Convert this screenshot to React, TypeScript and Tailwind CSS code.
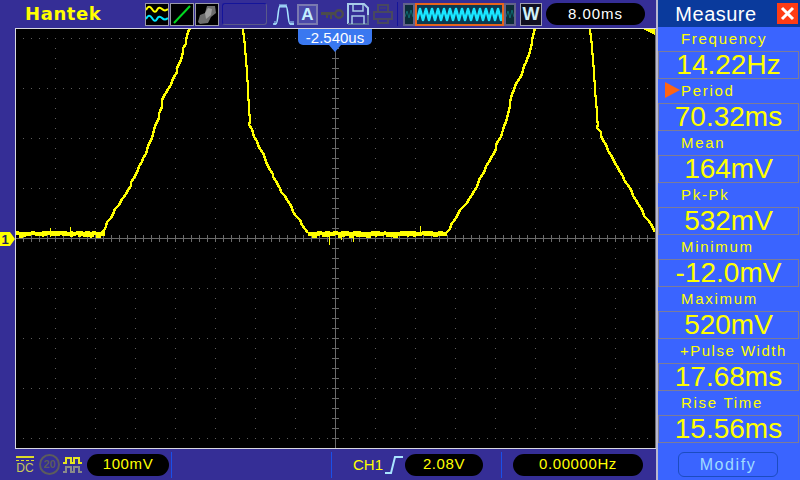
import React from "react";

const W = 641, H = 421, OX = 15, OY = 28;
const toLocal = (p: number[][]) => p.map(([x, y]) => [x - OX, y - OY]);

function jag(points: number[][]) {
  const out: string[] = [];
  let seed = 7;
  const rnd = () => {
    seed = (seed * 16807) % 2147483647;
    return seed / 2147483647;
  };
  for (let i = 0; i < points.length - 1; i++) {
    const [x1, y1] = points[i];
    const [x2, y2] = points[i + 1];
    const n = Math.max(2, Math.round(Math.abs(y2 - y1) / 4));
    for (let k = 0; k < n; k++) {
      const t = k / n;
      const steep = Math.abs(y2 - y1) > Math.abs(x2 - x1) * 4;
      out.push(
        `${Math.round(x1 + (x2 - x1) * t + (steep ? 0 : (rnd() - 0.5) * 2))},${Math.round(y1 + (y2 - y1) * t)}`
      );
    }
  }
  const l = points[points.length - 1];
  out.push(`${l[0]},${l[1]}`);
  return out.join(" ");
}

const segs = [
  [[102, 233], [108, 222], [118, 205], [128, 190], [140, 166], [150, 142], [158, 118], [163, 100], [170, 85], [178, 68], [184, 48], [190, 28]],
  [[243, 28], [246, 60], [248, 90], [250, 125], [258, 145], [270, 170], [282, 192], [296, 216], [308, 233]],
  [[447, 233], [458, 214], [472, 195], [485, 170], [497, 145], [507, 118], [513, 90], [522, 74], [529, 55], [535, 28]],
  [[590, 28], [593, 60], [595, 90], [598, 128], [610, 155], [625, 180], [640, 208], [655, 232]],
].map(toLocal);

const flats = [
  [16, 102],
  [308, 447],
];

function Scope() {
  const hLines = [38, 88, 138, 188, 288, 338, 388, 438].map((y) => y - OY);
  const vLines = Array.from({ length: 15 }, (_, i) => 40 * (i + 1)).filter((x) => x !== 320);
  const dots: React.ReactNode[] = [];
  hLines.forEach((y) => {
    for (let x = 8; x < 640; x += 8) dots.push(<rect key={`h${y}-${x}`} x={x} y={y} width={1} height={1} fill="#5c5c5c" />);
  });
  vLines.forEach((x) => {
    for (let y = 10; y < 420; y += 10) dots.push(<rect key={`v${x}-${y}`} x={x} y={y} width={1} height={1} fill="#5c5c5c" />);
  });
  const ticks: React.ReactNode[] = [];
  for (let x = 8; x < 640; x += 8) ticks.push(<rect key={`tx${x}`} x={x} y={207} width={1} height={7} fill="#6a6a6a" />);
  for (let y = 10; y < 420; y += 10) ticks.push(<rect key={`ty${y}`} x={317} y={y} width={7} height={1} fill="#6a6a6a" />);
  const noise: React.ReactNode[] = [];
  let s = 11;
  const next = (m: number) => {
    s = (s * 48271) % 2147483647;
    return s % m;
  };
  flats.forEach(([a, b]) => {
    let x = a;
    while (x < b) {
      const w = 2 + next(4);
      const top = 231 + next(2);
      const h = 4 + next(3);
      noise.push(<rect key={`n${x}`} x={x - OX} y={top - OY} width={w} height={h} fill="#ffff00" />);
      x += w;
    }
  });
  [[50, 228, 9], [70, 227, 10], [329, 232, 13], [341, 232, 8], [353, 232, 10], [420, 226, 10]].forEach(([x, y, h]) =>
    noise.push(<rect key={`s${x}`} x={x - OX} y={y - OY} width={1} height={h} fill="#ffff00" />)
  );
  return (
    <svg width={W} height={H} viewBox={`0 0 ${W} ${H}`} shapeRendering="crispEdges" className="block">
      <rect width={W} height={H} fill="#000" />
      {dots}
      <rect x={1} y={210} width={639} height={1} fill="#6a6a6a" />
      <rect x={320} y={1} width={1} height={419} fill="#6a6a6a" />
      {ticks}
      {noise}
      {segs.map((p, i) => (
        <polyline key={i} points={jag(p)} fill="none" stroke="#ffff00" strokeWidth={2.5} />
      ))}
      <polygon points="628,1 640,1 640,7" fill="#ffff00" />
      <rect x={0} y={0} width={W} height={1} fill="#d8d8e0" />
      <rect x={0} y={420} width={W} height={1} fill="#d8d8e0" />
      <rect x={0} y={0} width={1} height={H} fill="#d8d8e0" />
      <rect x={640} y={1} width={1} height={419} fill="#707070" />
    </svg>
  );
}

const IconBox = ({ children }: { children: React.ReactNode }) => (
  <div className="w-[24px] h-[23px] border border-[#9a9aa8] bg-black overflow-hidden">{children}</div>
);

const Pill = ({ w, children, white }: { w: string; children: React.ReactNode; white?: boolean }) => (
  <div className={`${w} h-[22px] rounded-full bg-black flex items-center justify-center text-[15px] tracking-[0.6px] ${white ? "text-white" : "text-[#ffff00]"}`}>
    {children}
  </div>
);

const MiniWave = () => (
  <div className="w-[12px] bg-[#0c2c38] border-[2px] border-[#62628a] overflow-hidden">
    <svg width="8" height="18" viewBox="0 0 8 18" fill="none" stroke="#0f6a70" strokeWidth="1">
      <path d="M0 12 L2 6 L4 13 L6 5 L8 12" />
    </svg>
  </div>
);

const wavePath = (() => {
  let d = "M0 15";
  for (let x = 3, i = 0; x <= 87; x += 3, i++) d += ` L${x} ${i % 2 === 0 ? 4 : 15}`;
  return d;
})();

function TopBar() {
  return (
    <div className="h-[28px] flex items-center bg-[#352e96] relative">
      <div className="w-[145px] pl-[25px] text-[#ffff00] font-bold text-[18px] tracking-[0.6px] leading-none font-['DejaVu_Sans',sans-serif]">Hantek</div>
      <div className="flex gap-[1px] items-center">
        <IconBox>
          <svg viewBox="0 0 22 21" width="22" height="21" fill="none" strokeWidth="2">
            <path d="M0 6 Q3 0 6 5 T11 6 T16 5 T22 5" stroke="#ffff00" />
            <path d="M0 15 Q3 9 6 14 T11 15 T16 14 T22 14" stroke="#00e5ff" />
          </svg>
        </IconBox>
        <IconBox>
          <svg viewBox="0 0 22 21" width="22" height="21"><path d="M3 19 L19 2" stroke="#00d820" strokeWidth="2" /></svg>
        </IconBox>
        <IconBox>
          <svg viewBox="0 0 22 21" width="22" height="21">
            <path d="M2 18 L4 11 L9 9 L11 2 L19 2 L20 9 L15 13 L12 19 L4 20 Z" fill="#6e6e6e" />
            <path d="M9 9 L12 4 L16 5 L15 11 L10 15 Z" fill="#a0a0a0" />
          </svg>
        </IconBox>
      </div>
      <div className="ml-[3px] w-[45px] h-[22px] rounded-[3px] border border-[#14149a] border-r-[#5a5a8a] border-b-[#5a5a8a]" />
      <svg className="ml-[5px]" width="23" height="23" viewBox="0 0 23 23" fill="none" stroke="#a8e4ff" strokeWidth="1.6">
        <path d="M1 21 H4 C6 21 6 3 8 3 H14 C16 3 16 21 18 21 H22" />
        <path d="M8 1 V5 M10 1 V5 M12 1 V5 M14 1 V5 M3 18 V22 M19 18 V22 M21 18 V22" strokeWidth="1" />
      </svg>
      <div className="ml-[2px] w-[21px] h-[21px] border-[2px] border-[#7a7ab0] bg-[#4a48a8] flex items-center justify-center text-[#c4eeff] font-bold text-[17px] leading-none font-['Liberation_Sans',sans-serif]">A</div>
      <svg className="ml-[3px]" width="23" height="14" viewBox="0 0 23 14" fill="none">
        <path d="M0 5 H14 V8 H11 V12 H9 V8 H7 V11 H5 V8 H0 Z" fill="#4c4c4c" />
        <circle cx="18" cy="7" r="3.8" stroke="#4c4c4c" strokeWidth="2.4" />
      </svg>
      <svg className="ml-[3px]" width="22" height="22" viewBox="0 0 22 22" fill="none" strokeWidth="2">
        <path d="M1 21 V1 H17 L21 5 V12" stroke="#a8cce8" />
        <path d="M1 21 H21 V12" stroke="#586c98" />
        <path d="M6 1 V8 H16 V1" stroke="#a8cce8" strokeWidth="1.5" />
        <path d="M5 21 V13 H17 V21" stroke="#a8cce8" strokeWidth="1.5" />
      </svg>
      <svg className="ml-[4px]" width="20" height="20" viewBox="0 0 20 20" fill="none" stroke="#484860" strokeWidth="2">
        <path d="M5 8 V1 H15 V8 M1 8 H19 V15 H1 Z M5 15 V19 H15 V15" />
        <path d="M7 4 H13" strokeWidth="1" />
      </svg>
      <div className="ml-[4px] w-[1px] h-[24px] bg-[#14149a]" />
      <div className="ml-[5px] w-[113px] h-[23px] flex items-stretch">
        <MiniWave />
        <div className="flex-1 border-[2px] border-[#e8641c] bg-[#0a3a52] overflow-hidden">
          <svg width="85" height="19" viewBox="0 0 85 19" fill="none" stroke="#19e6ff" strokeWidth="2.6" strokeLinejoin="round">
            <path d={wavePath} />
          </svg>
        </div>
        <MiniWave />
      </div>
      <div className="ml-[4px] w-[22px] h-[23px] border border-[#a0a0b0] bg-[#101020] flex items-center justify-center text-[#d0f0f8] font-bold text-[18px] leading-none font-['Liberation_Sans',sans-serif]">W</div>
      <div className="ml-[4px]">
        <Pill w="w-[99px]" white><span className="text-[15px] tracking-[1px]">8.00ms</span></Pill>
      </div>
    </div>
  );
}

function BottomBar() {
  return (
    <div className="h-[31px] flex items-center bg-[#352e96] pl-[16px]">
      <div className="w-[18px] flex flex-col items-center leading-none">
        <div className="w-[18px] h-[2px] bg-[#dcdc28]" />
        <div className="w-[18px] h-[1px] mt-[2px] border-t border-dashed border-[#dcdc28]" />
        <div className="text-[#c8c85a] text-[12px] mt-[1px]">DC</div>
      </div>
      <div className="ml-[5px] w-[21px] h-[21px] rounded-full border-[2px] border-[#5c5c5c] flex items-center justify-center text-[#5c5c5c] text-[11px] font-bold leading-none">20</div>
      <svg className="ml-[3px]" width="19" height="18" viewBox="0 0 19 18" fill="none" strokeWidth="1.5" shapeRendering="crispEdges">
        <path d="M0 7 H3 V2 H8 V7 H11 V2 H16 V7 H19" stroke="#e6e620" />
        <path d="M0 16 H3 V11 H8 V16 H11 V11 H16 V16 H19" stroke="#8a8a8a" />
      </svg>
      <div className="ml-[5px]"><Pill w="w-[82px]">100mV</Pill></div>
      <div className="ml-[2px] w-[1px] h-[26px] bg-[#1a50e8]" />
      <div className="ml-[159px] w-[1px] h-[26px] bg-[#1a50e8]" />
      <div className="ml-[21px] w-[29px] text-[#ffff00] text-[15px] leading-none">CH1</div>
      <svg className="ml-[3px]" width="19" height="20" viewBox="0 0 19 20" fill="none" stroke="#a8e4ff" strokeWidth="2">
        <path d="M0 18 H6 L10 2 H18" />
      </svg>
      <div className="ml-[1px]"><Pill w="w-[78px]">2.08V</Pill></div>
      <div className="ml-[18px] w-[1px] h-[26px] bg-[#1a50e8]" />
      <div className="ml-[11px]"><Pill w="w-[130px]">0.00000Hz</Pill></div>
    </div>
  );
}

const rows = [
  { label: "Frequency", value: "14.22Hz" },
  { label: "Period", value: "70.32ms", active: true },
  { label: "Mean", value: "164mV" },
  { label: "Pk-Pk", value: "532mV" },
  { label: "Minimum", value: "-12.0mV" },
  { label: "Maximum", value: "520mV" },
  { label: "+Pulse Width", value: "17.68ms", wide: true },
  { label: "Rise Time", value: "15.56ms" },
];

function Measure() {
  return (
    <div className="w-[144px] h-[480px] flex flex-col bg-[#3a64ff] border-l-[2px] border-[#b8b8d0]">
      <div className="h-[27px] bg-[#0a3a9c] flex items-center relative">
        <div className="w-[116px] text-center text-white text-[20px] leading-none pt-[1px] tracking-[0.5px]">Measure</div>
        <div className="absolute left-[119px] top-[3px] w-[21px] h-[21px] bg-[#ff3c14] flex items-center justify-center">
          <svg width="15" height="15" viewBox="0 0 15 15" stroke="#ffffff" strokeWidth="3"><path d="M2 2 L13 13 M13 2 L2 13" /></svg>
        </div>
      </div>
      {rows.map((r) => (
        <div key={r.label}>
          <div className={`h-[24px] pb-[2px] flex items-center text-[#ffff00] text-[15px] leading-none relative ${r.wide ? "pl-[22px] tracking-[1.5px]" : "pl-[23px] tracking-[1.7px]"}`}>
            {r.active && (
              <svg className="absolute left-[7px] top-[3px]" width="15" height="16" viewBox="0 0 15 16"><path d="M0 0 L15 8 L0 16 Z" fill="#ff6414" /></svg>
            )}
            {r.label}
          </div>
          <div className="h-[28px] w-[141px] border-[1px] border-[#7c7c98] flex items-center justify-center text-[#ffff00] text-[28px] leading-none">
            {r.value}
          </div>
        </div>
      ))}
      <div className="mt-[9px] ml-[20px]">
        <div className="w-[100px] h-[25px] rounded-[6px] border border-[#1c4cc0] bg-[#3a64ff] flex items-center justify-center text-[#a0dcff] text-[16px] tracking-[1.6px] leading-none">Modify</div>
      </div>
    </div>
  );
}

export default function App() {
  return (
    <div className="w-[800px] h-[480px] flex overflow-hidden bg-[#352e96] font-['Liberation_Sans',sans-serif]">
      <div className="w-[656px] flex flex-col">
        <TopBar />
        <div className="h-[421px] flex relative">
          <div className="w-[15px]" />
          <Scope />
          <div className="absolute left-[298px] top-[1px] flex flex-col items-center">
            <div className="w-[74px] h-[16px] rounded-b-[5px] bg-[#3a78f0] text-white text-[15px] leading-none flex items-center justify-center">-2.540us</div>
            <div className="w-0 h-0 border-l-[6px] border-r-[6px] border-t-[7px] border-l-transparent border-r-transparent border-t-[#3a78f0]" />
          </div>
          <div className="absolute left-0 top-[204px] flex items-center">
            <div className="w-[10px] h-[14px] bg-[#ffff00] text-[#202060] text-[13px] font-bold leading-none flex items-center justify-center">1</div>
            <div className="w-0 h-0 border-t-[7px] border-b-[7px] border-l-[5px] border-t-transparent border-b-transparent border-l-[#ffff00]" />
          </div>
        </div>
        <BottomBar />
      </div>
      <Measure />
    </div>
  );
}
